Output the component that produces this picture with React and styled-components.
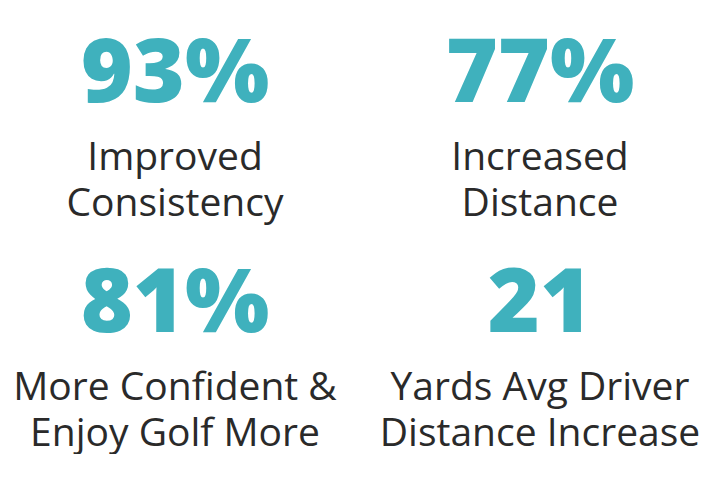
import React from 'react';
import styled, {createGlobalStyle} from 'styled-components';

const teal = '#3fb1bd';
const ink = '#2a2a2a';

const GlobalStyle = createGlobalStyle`
  html, body {
    margin: 0;
    padding: 0;
    background: #ffffff;
  }
  body {
    font-family: "Open Sans", "Noto Sans", sans-serif;
  }
`;

const Grid = styled.div`
  display: grid;
  grid-template-columns: 350px 350px;
  column-gap: 15px;
  row-gap: 29px;
  padding-top: 23px;
  width: 723px;
`;

const Stat = styled.div`
  display: flex;
  flex-direction: column;
  align-items: center;
  text-align: center;
  gap: 20px;
`;

const Figure = styled.div`
  font-size: 89px;
  font-weight: 800;
  line-height: 89px;
  color: ${teal};
`;

const Label = styled.div`
  font-size: 39px;
  font-weight: 500;
  line-height: 46px;
  color: ${ink};
  white-space: nowrap;
`;

const stats = [
  {value: '93%', lines: ['Improved', 'Consistency']},
  {value: '77%', lines: ['Increased', 'Distance']},
  {value: '81%', lines: ['More Confident &', 'Enjoy Golf More']},
  {value: '21', lines: ['Yards Avg Driver', 'Distance Increase']}
];

export default function App() {
  return (
    <>
      <GlobalStyle />
      <Grid>
        {stats.map(s => (
          <Stat key={s.value}>
            <Figure>{s.value}</Figure>
            <Label>
              {s.lines[0]}
              <br />
              {s.lines[1]}
            </Label>
          </Stat>
        ))}
      </Grid>
    </>
  );
}
